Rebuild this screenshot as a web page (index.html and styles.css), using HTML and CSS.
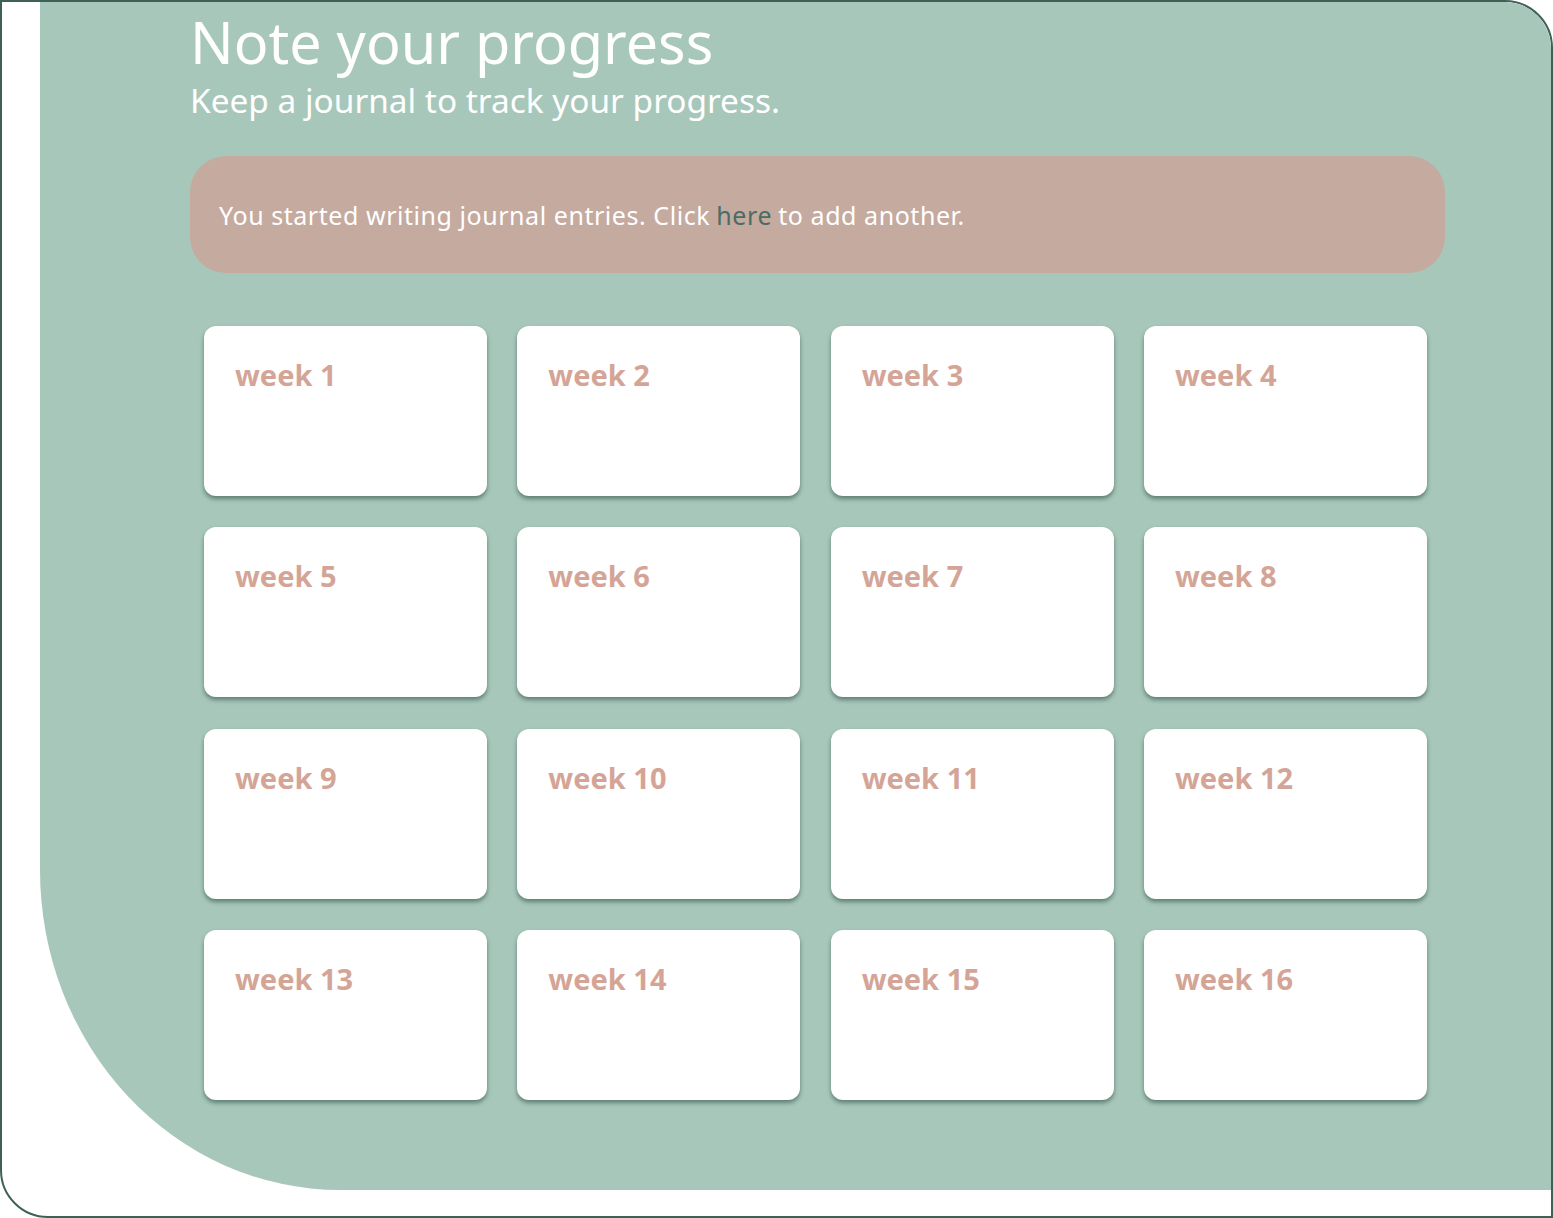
FILE: index.html
```html
<!DOCTYPE html>
<html>
<head>
<meta charset="utf-8">
<link rel="stylesheet" href="styles.css">
</head>
<body>
<div class="frame">
  <section class="panel">
    <h1 class="title">Note your progress</h1>
    <p class="subtitle">Keep a journal to track your progress.</p>
    <div class="banner">You started writing journal entries. Click <a class="link" href="#">here</a> to add another.</div>
    <div class="grid">
      <div class="card">week 1</div>
      <div class="card">week 2</div>
      <div class="card">week 3</div>
      <div class="card">week 4</div>
      <div class="card">week 5</div>
      <div class="card">week 6</div>
      <div class="card">week 7</div>
      <div class="card">week 8</div>
      <div class="card">week 9</div>
      <div class="card">week 10</div>
      <div class="card">week 11</div>
      <div class="card">week 12</div>
      <div class="card">week 13</div>
      <div class="card">week 14</div>
      <div class="card">week 15</div>
      <div class="card">week 16</div>
    </div>
  </section>
</div>
</body>
</html>
```
FILE: styles.css
```css
html, body {
  margin: 0;
  padding: 0;
  background: #ffffff;
}
body {
  font-family: "Noto Sans", "Open Sans", sans-serif;
}
.frame {
  width: 1553px;
  height: 1218px;
  box-sizing: border-box;
  border: 2px solid #3d6157;
  border-radius: 0 48px 0 48px;
  overflow: hidden;
  background: #ffffff;
}
.panel {
  margin-left: 38px;
  height: 1188px;
  box-sizing: border-box;
  background: #a7c7ba;
  border-radius: 0 46px 0 300px / 0 46px 0 320px;
  padding: 7px 106px 0 150px;
}
.title {
  margin: 0;
  font-weight: 400;
  font-size: 57.5px;
  line-height: 66px;
  color: #ffffff;
}
.subtitle {
  margin: 4px 0 0;
  font-size: 33.4px;
  line-height: 42px;
  color: #ffffff;
}
.banner {
  margin-top: 35px;
  height: 117px;
  box-sizing: border-box;
  padding: 0 29px;
  display: flex;
  align-items: center;
  background: #c5aa9f;
  border-radius: 36px;
  font-size: 25px;
  letter-spacing: 0.55px;
  color: #ffffff;
}
.link {
  color: #4a6c64;
  text-decoration: none;
  margin: 0 0.25em;
}
.grid {
  margin-top: 53px;
  padding: 0 18px 0 14px;
  display: grid;
  grid-template-columns: repeat(4, 1fr);
  column-gap: 30.33px;
  row-gap: 31.33px;
}
.card {
  height: 170px;
  box-sizing: border-box;
  background: #ffffff;
  border-radius: 12px;
  box-shadow: 0 3px 4px rgba(80, 110, 100, 0.8);
  padding: 30px 31px 0;
  font-size: 29px;
  font-weight: 700;
  line-height: 38px;
  color: #d4a597;
}
```
